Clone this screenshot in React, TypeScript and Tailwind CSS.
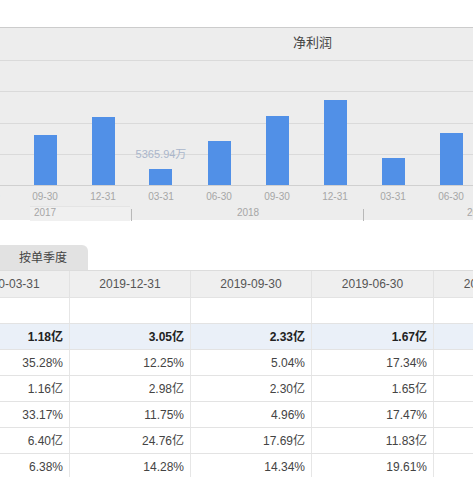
const font = { fontFamily: '"Liberation Sans", "Noto Sans CJK SC", sans-serif' };

const bars = [
  { x: 34, top: 134 },
  { x: 92, top: 116 },
  { x: 149, top: 168 },
  { x: 208, top: 140 },
  { x: 266, top: 115 },
  { x: 324, top: 99 },
  { x: 382, top: 157 },
  { x: 440, top: 132 },
];

const ticks = [
  { x: -13, t: "06-30" },
  { x: 45, t: "09-30" },
  { x: 103, t: "12-31" },
  { x: 161, t: "03-31" },
  { x: 219, t: "06-30" },
  { x: 277, t: "09-30" },
  { x: 335, t: "12-31" },
  { x: 393, t: "03-31" },
  { x: 451, t: "06-30" },
];

const dates = ["2020-03-31", "2019-12-31", "2019-09-30", "2019-06-30", "2019-03-31"];

const rows: { cells: string[]; bold?: boolean }[] = [
  { cells: ["", "", "", "", ""] },
  { cells: ["1.18亿", "3.05亿", "2.33亿", "1.67亿", ""], bold: true },
  { cells: ["35.28%", "12.25%", "5.04%", "17.34%", ""] },
  { cells: ["1.16亿", "2.98亿", "2.30亿", "1.65亿", ""] },
  { cells: ["33.17%", "11.75%", "4.96%", "17.47%", ""] },
  { cells: ["6.40亿", "24.76亿", "17.69亿", "11.83亿", ""] },
  { cells: ["6.38%", "14.28%", "14.34%", "19.61%", ""] },
];

const colW = ["w-[121px]", "w-[121px]", "w-[121px]", "w-[122px]", "w-[122px]"];

// chart coords are page y minus the panel's top
const oy = 27;

function Chart() {
  return (
    <svg width="473" height="193" className="block">
      {[59, 90, 122, 153].map((y) => (
        <line key={y} x1="0" x2="473" y1={y - oy + 0.5} y2={y - oy + 0.5} stroke="#dadada" />
      ))}
      <line x1="0" x2="473" y1={184 - oy + 0.5} y2={184 - oy + 0.5} stroke="#d0d0d0" />
      {bars.map((b) => (
        <rect key={b.x} x={b.x} y={b.top - oy} width="23" height={184 - b.top} fill="#5190e7" />
      ))}
      <text x="161" y={157 - oy} textAnchor="middle" fontSize="11" fill="#aab6cb" style={font}>
        5365.94万
      </text>
      {ticks.map((t) => (
        <text key={t.x} x={t.x} y={199 - oy} textAnchor="middle" fontSize="10" fill="#a6a6a6" style={font}>
          {t.t}
        </text>
      ))}
      <rect x="30" y={205 - oy + 0.5} width="100" height="16" fill="#f0f0f0" />
      <line x1="30" x2="130" y1={205 - oy + 0.5} y2={205 - oy + 0.5} stroke="#e4e4e4" />
      <text x="45" y={215 - oy} textAnchor="middle" fontSize="10" fill="#a6a6a6" style={font}>
        2017
      </text>
      <text x="248" y={215 - oy} textAnchor="middle" fontSize="10" fill="#a6a6a6" style={font}>
        2018
      </text>
      <text x="467" y={215 - oy} fontSize="10" fill="#a6a6a6" style={font}>
        2019
      </text>
      <line x1="131.5" x2="131.5" y1={208 - oy} y2={220 - oy} stroke="#b8b8b8" />
      <line x1="363.5" x2="363.5" y1={208 - oy} y2={220 - oy} stroke="#b8b8b8" />
    </svg>
  );
}

export default function App() {
  return (
    <div className="h-[477px] w-[473px] overflow-hidden bg-white" style={font}>
      <div className="h-[27px]" />

      <div className="relative h-[193px] border-t border-[#cccccc] bg-[#ededed]">
        <div className="absolute left-[293px] top-[5px] text-[13px] text-[#444]">净利润</div>
        <Chart />
      </div>

      <div className="h-[25px]" />

      <div className="flex h-[25px] items-end">
        <div className="flex h-[25px] w-[88px] items-center justify-center rounded-tr-[6px] bg-[#e2e2e2] pr-[2px] text-[12px] text-[#444]">
          按单季度
        </div>
      </div>

      <div className="-ml-[51px]">
        <div className="flex h-[27px] border-t border-[#dcdcdc] bg-[#efefef]">
          {dates.map((d, i) => (
            <div
              key={d}
              className={`${colW[i]} flex shrink-0 items-center justify-center border-r border-[#e2e2e2] text-[12px] text-[#555]`}
            >
              {d}
            </div>
          ))}
        </div>
        {rows.map((r, ri) => (
          <div
            key={ri}
            className={`flex h-[26px] border-t border-[#e3e3e3] ${r.bold ? "bg-[#eaf0f8] font-bold text-[#222]" : "bg-white text-[#444]"}`}
          >
            {r.cells.map((c, ci) => (
              <div
                key={ci}
                className={`${colW[ci]} flex shrink-0 items-center justify-end border-r border-[#e6e6e6] pr-[6px] text-[12px]`}
              >
                {c}
              </div>
            ))}
          </div>
        ))}
      </div>
    </div>
  );
}
